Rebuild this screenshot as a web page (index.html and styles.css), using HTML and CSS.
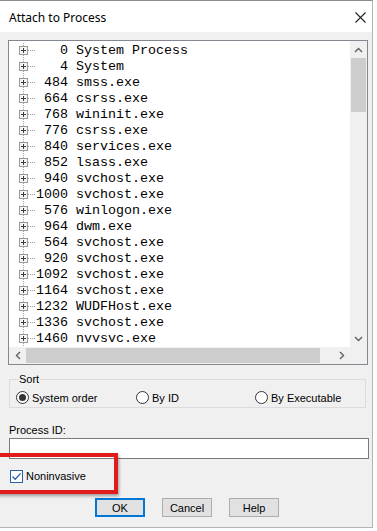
FILE: index.html
```html
<!DOCTYPE html>
<html>
<head>
<meta charset="utf-8">
<title>Attach to Process</title>
<link rel="stylesheet" href="styles.css">
</head>
<body>
<div class="window">
  <div class="titlebar">
    <span class="title">Attach to Process</span>
    <svg class="close" width="11" height="11" viewBox="0 0 11 11"><path d="M0.5 0.5L10.5 10.5M10.5 0.5L0.5 10.5" stroke="#222" stroke-width="1.1" fill="none"/></svg>
  </div>
  <div class="content">
    <div class="listbox">
      <div class="rows">
        <div class="row"><svg class="tw" width="17" height="16"><path d="M4.5 0V3M4.5 12V16" stroke="#a0a0a0" stroke-dasharray="1 1"/><rect x="0.5" y="3.5" width="8" height="8" fill="#f4f4f4" stroke="#9a9a9a"/><path d="M2 7.5H7M4.5 5V10" stroke="#3c3c3c"/><path d="M9 7.5H16" stroke="#a0a0a0" stroke-dasharray="1 1"/></svg><span class="txt">   0 System Process</span></div>
        <div class="row"><svg class="tw" width="17" height="16"><path d="M4.5 0V3M4.5 12V16" stroke="#a0a0a0" stroke-dasharray="1 1"/><rect x="0.5" y="3.5" width="8" height="8" fill="#f4f4f4" stroke="#9a9a9a"/><path d="M2 7.5H7M4.5 5V10" stroke="#3c3c3c"/><path d="M9 7.5H16" stroke="#a0a0a0" stroke-dasharray="1 1"/></svg><span class="txt">   4 System</span></div>
        <div class="row"><svg class="tw" width="17" height="16"><path d="M4.5 0V3M4.5 12V16" stroke="#a0a0a0" stroke-dasharray="1 1"/><rect x="0.5" y="3.5" width="8" height="8" fill="#f4f4f4" stroke="#9a9a9a"/><path d="M2 7.5H7M4.5 5V10" stroke="#3c3c3c"/><path d="M9 7.5H16" stroke="#a0a0a0" stroke-dasharray="1 1"/></svg><span class="txt"> 484 smss.exe</span></div>
        <div class="row"><svg class="tw" width="17" height="16"><path d="M4.5 0V3M4.5 12V16" stroke="#a0a0a0" stroke-dasharray="1 1"/><rect x="0.5" y="3.5" width="8" height="8" fill="#f4f4f4" stroke="#9a9a9a"/><path d="M2 7.5H7M4.5 5V10" stroke="#3c3c3c"/><path d="M9 7.5H16" stroke="#a0a0a0" stroke-dasharray="1 1"/></svg><span class="txt"> 664 csrss.exe</span></div>
        <div class="row"><svg class="tw" width="17" height="16"><path d="M4.5 0V3M4.5 12V16" stroke="#a0a0a0" stroke-dasharray="1 1"/><rect x="0.5" y="3.5" width="8" height="8" fill="#f4f4f4" stroke="#9a9a9a"/><path d="M2 7.5H7M4.5 5V10" stroke="#3c3c3c"/><path d="M9 7.5H16" stroke="#a0a0a0" stroke-dasharray="1 1"/></svg><span class="txt"> 768 wininit.exe</span></div>
        <div class="row"><svg class="tw" width="17" height="16"><path d="M4.5 0V3M4.5 12V16" stroke="#a0a0a0" stroke-dasharray="1 1"/><rect x="0.5" y="3.5" width="8" height="8" fill="#f4f4f4" stroke="#9a9a9a"/><path d="M2 7.5H7M4.5 5V10" stroke="#3c3c3c"/><path d="M9 7.5H16" stroke="#a0a0a0" stroke-dasharray="1 1"/></svg><span class="txt"> 776 csrss.exe</span></div>
        <div class="row"><svg class="tw" width="17" height="16"><path d="M4.5 0V3M4.5 12V16" stroke="#a0a0a0" stroke-dasharray="1 1"/><rect x="0.5" y="3.5" width="8" height="8" fill="#f4f4f4" stroke="#9a9a9a"/><path d="M2 7.5H7M4.5 5V10" stroke="#3c3c3c"/><path d="M9 7.5H16" stroke="#a0a0a0" stroke-dasharray="1 1"/></svg><span class="txt"> 840 services.exe</span></div>
        <div class="row"><svg class="tw" width="17" height="16"><path d="M4.5 0V3M4.5 12V16" stroke="#a0a0a0" stroke-dasharray="1 1"/><rect x="0.5" y="3.5" width="8" height="8" fill="#f4f4f4" stroke="#9a9a9a"/><path d="M2 7.5H7M4.5 5V10" stroke="#3c3c3c"/><path d="M9 7.5H16" stroke="#a0a0a0" stroke-dasharray="1 1"/></svg><span class="txt"> 852 lsass.exe</span></div>
        <div class="row"><svg class="tw" width="17" height="16"><path d="M4.5 0V3M4.5 12V16" stroke="#a0a0a0" stroke-dasharray="1 1"/><rect x="0.5" y="3.5" width="8" height="8" fill="#f4f4f4" stroke="#9a9a9a"/><path d="M2 7.5H7M4.5 5V10" stroke="#3c3c3c"/><path d="M9 7.5H16" stroke="#a0a0a0" stroke-dasharray="1 1"/></svg><span class="txt"> 940 svchost.exe</span></div>
        <div class="row"><svg class="tw" width="17" height="16"><path d="M4.5 0V3M4.5 12V16" stroke="#a0a0a0" stroke-dasharray="1 1"/><rect x="0.5" y="3.5" width="8" height="8" fill="#f4f4f4" stroke="#9a9a9a"/><path d="M2 7.5H7M4.5 5V10" stroke="#3c3c3c"/><path d="M9 7.5H16" stroke="#a0a0a0" stroke-dasharray="1 1"/></svg><span class="txt">1000 svchost.exe</span></div>
        <div class="row"><svg class="tw" width="17" height="16"><path d="M4.5 0V3M4.5 12V16" stroke="#a0a0a0" stroke-dasharray="1 1"/><rect x="0.5" y="3.5" width="8" height="8" fill="#f4f4f4" stroke="#9a9a9a"/><path d="M2 7.5H7M4.5 5V10" stroke="#3c3c3c"/><path d="M9 7.5H16" stroke="#a0a0a0" stroke-dasharray="1 1"/></svg><span class="txt"> 576 winlogon.exe</span></div>
        <div class="row"><svg class="tw" width="17" height="16"><path d="M4.5 0V3M4.5 12V16" stroke="#a0a0a0" stroke-dasharray="1 1"/><rect x="0.5" y="3.5" width="8" height="8" fill="#f4f4f4" stroke="#9a9a9a"/><path d="M2 7.5H7M4.5 5V10" stroke="#3c3c3c"/><path d="M9 7.5H16" stroke="#a0a0a0" stroke-dasharray="1 1"/></svg><span class="txt"> 964 dwm.exe</span></div>
        <div class="row"><svg class="tw" width="17" height="16"><path d="M4.5 0V3M4.5 12V16" stroke="#a0a0a0" stroke-dasharray="1 1"/><rect x="0.5" y="3.5" width="8" height="8" fill="#f4f4f4" stroke="#9a9a9a"/><path d="M2 7.5H7M4.5 5V10" stroke="#3c3c3c"/><path d="M9 7.5H16" stroke="#a0a0a0" stroke-dasharray="1 1"/></svg><span class="txt"> 564 svchost.exe</span></div>
        <div class="row"><svg class="tw" width="17" height="16"><path d="M4.5 0V3M4.5 12V16" stroke="#a0a0a0" stroke-dasharray="1 1"/><rect x="0.5" y="3.5" width="8" height="8" fill="#f4f4f4" stroke="#9a9a9a"/><path d="M2 7.5H7M4.5 5V10" stroke="#3c3c3c"/><path d="M9 7.5H16" stroke="#a0a0a0" stroke-dasharray="1 1"/></svg><span class="txt"> 920 svchost.exe</span></div>
        <div class="row"><svg class="tw" width="17" height="16"><path d="M4.5 0V3M4.5 12V16" stroke="#a0a0a0" stroke-dasharray="1 1"/><rect x="0.5" y="3.5" width="8" height="8" fill="#f4f4f4" stroke="#9a9a9a"/><path d="M2 7.5H7M4.5 5V10" stroke="#3c3c3c"/><path d="M9 7.5H16" stroke="#a0a0a0" stroke-dasharray="1 1"/></svg><span class="txt">1092 svchost.exe</span></div>
        <div class="row"><svg class="tw" width="17" height="16"><path d="M4.5 0V3M4.5 12V16" stroke="#a0a0a0" stroke-dasharray="1 1"/><rect x="0.5" y="3.5" width="8" height="8" fill="#f4f4f4" stroke="#9a9a9a"/><path d="M2 7.5H7M4.5 5V10" stroke="#3c3c3c"/><path d="M9 7.5H16" stroke="#a0a0a0" stroke-dasharray="1 1"/></svg><span class="txt">1164 svchost.exe</span></div>
        <div class="row"><svg class="tw" width="17" height="16"><path d="M4.5 0V3M4.5 12V16" stroke="#a0a0a0" stroke-dasharray="1 1"/><rect x="0.5" y="3.5" width="8" height="8" fill="#f4f4f4" stroke="#9a9a9a"/><path d="M2 7.5H7M4.5 5V10" stroke="#3c3c3c"/><path d="M9 7.5H16" stroke="#a0a0a0" stroke-dasharray="1 1"/></svg><span class="txt">1232 WUDFHost.exe</span></div>
        <div class="row"><svg class="tw" width="17" height="16"><path d="M4.5 0V3M4.5 12V16" stroke="#a0a0a0" stroke-dasharray="1 1"/><rect x="0.5" y="3.5" width="8" height="8" fill="#f4f4f4" stroke="#9a9a9a"/><path d="M2 7.5H7M4.5 5V10" stroke="#3c3c3c"/><path d="M9 7.5H16" stroke="#a0a0a0" stroke-dasharray="1 1"/></svg><span class="txt">1336 svchost.exe</span></div>
        <div class="row"><svg class="tw" width="17" height="16"><path d="M4.5 0V3M4.5 12V16" stroke="#a0a0a0" stroke-dasharray="1 1"/><rect x="0.5" y="3.5" width="8" height="8" fill="#f4f4f4" stroke="#9a9a9a"/><path d="M2 7.5H7M4.5 5V10" stroke="#3c3c3c"/><path d="M9 7.5H16" stroke="#a0a0a0" stroke-dasharray="1 1"/></svg><span class="txt">1460 nvvsvc.exe</span></div>
      </div>
      <div class="vscroll">
        <div class="sbtn"><svg width="9" height="6" viewBox="0 0 9 6"><path d="M1 5L4.5 1.5L8 5" stroke="#606060" stroke-width="1.4" fill="none"/></svg></div>
        <div class="vthumb"></div>
        <div class="vtrack"></div>
        <div class="sbtn"><svg width="9" height="6" viewBox="0 0 9 6"><path d="M1 1L4.5 4.5L8 1" stroke="#606060" stroke-width="1.4" fill="none"/></svg></div>
      </div>
      <div class="hscroll">
        <div class="sbtn"><svg width="6" height="9" viewBox="0 0 6 9"><path d="M5 1L1.5 4.5L5 8" stroke="#606060" stroke-width="1.4" fill="none"/></svg></div>
        <div class="hthumb"></div>
        <div class="htrack"></div>
        <div class="sbtn"><svg width="6" height="9" viewBox="0 0 6 9"><path d="M1 1L4.5 4.5L1 8" stroke="#606060" stroke-width="1.4" fill="none"/></svg></div>
      </div>
      <div class="corner"></div>
    </div>

    <fieldset class="group">
      <legend class="legend">Sort</legend>
      <div class="radios">
        <div class="radio"><span class="rcircle on"></span><span>System order</span></div>
        <div class="radio"><span class="rcircle"></span><span>By ID</span></div>
        <div class="radio"><span class="rcircle"></span><span>By Executable</span></div>
      </div>
    </fieldset>

    <div class="pid-label">Process ID:</div>
    <div class="pid-input"></div>

    <div class="check">
      <span class="cbox"><svg width="11" height="11" viewBox="0 0 11 11"><path d="M1.5 5.5L4.2 8.3L9.6 2.4" stroke="#2a62a8" stroke-width="1.3" fill="none"/></svg></span>
      <span>Noninvasive</span>
    </div>

    <div class="buttons">
      <div class="btn default">OK</div>
      <div class="btn">Cancel</div>
      <div class="btn">Help</div>
    </div>

    <div class="highlight"></div>
  </div>
</div>
</body>
</html>
```

FILE: styles.css
```css
html, body {
  margin: 0;
  padding: 0;
  background: #ffffff;
}

.window {
  width: 372px;
  height: 526px;
  border-top: 1px solid #8c8c8c;
  border-right: 1px solid #b4b4b4;
  border-bottom: 1px solid #b4b4b4;
  background: #f0f0f0;
  display: flex;
  flex-direction: column;
  overflow: hidden;
}

.titlebar {
  height: 31px;
  background: #ffffff;
  display: flex;
  align-items: center;
  justify-content: space-between;
  padding: 0 6px 0 9px;
  flex: none;
}

.title {
  font-family: "Noto Sans", "Open Sans", sans-serif;
  font-size: 12px;
  color: #000;
  padding-top: 1px;
}

.close {
  display: block;
  margin-top: 2px;
}

.content {
  position: relative;
  flex: 1;
  padding: 8px 0 0 8px;
  font-family: "Liberation Sans", Arial, sans-serif;
  font-size: 11px;
  color: #000;
}

.listbox {
  width: 358px;
  height: 323px;
  border: 1px solid #828790;
  background: #fff;
  display: grid;
  grid-template-columns: 1fr 17px;
  grid-template-rows: 1fr 17px;
}

.rows {
  overflow: hidden;
  padding-left: 10px;
  padding-top: 2px;
}

.row {
  height: 16px;
  display: flex;
  align-items: center;
}

.tw {
  display: block;
  flex: none;
}

.txt {
  font-family: "Liberation Mono", "Courier New", monospace;
  font-size: 13.33px;
  white-space: pre;
  color: #000;
  line-height: 16px;
}

.vscroll {
  background: #f0f0f0;
  display: flex;
  flex-direction: column;
}

.sbtn {
  width: 17px;
  height: 17px;
  flex: none;
  display: flex;
  align-items: center;
  justify-content: center;
}

.vthumb {
  height: 54px;
  margin: 0 1px;
  background: #cdcdcd;
  flex: none;
}

.vtrack {
  flex: 1;
}

.hscroll {
  background: #f0f0f0;
  display: flex;
}

.hthumb {
  width: 294px;
  margin: 1px 0;
  background: #cdcdcd;
  flex: none;
}

.htrack {
  flex: 1;
}

.corner {
  background: #f0f0f0;
}

.group {
  margin: 8px 0 0 1px;
  width: 357px;
  height: 35px;
  box-sizing: border-box;
  border: 1px solid #dcdcdc;
  padding: 0 0 0 6px;
  min-width: 0;
}

.legend {
  padding: 0 1px;
  margin-left: 2px;
  font-size: 11px;
  line-height: 13px;
}

.radios {
  display: grid;
  grid-template-columns: 120px 119px auto;
  margin-top: 5px;
}

.radio {
  display: flex;
  align-items: center;
  gap: 3px;
}

.rcircle {
  width: 11px;
  height: 11px;
  border: 1px solid #333;
  border-radius: 50%;
  background: #fff;
  display: flex;
  align-items: center;
  justify-content: center;
  flex: none;
}

.rcircle.on::after {
  content: "";
  width: 7px;
  height: 7px;
  border-radius: 50%;
  background: #333;
}

.pid-label {
  margin-top: 16px;
  line-height: 13px;
  padding-left: 1px;
}

.pid-input {
  margin-top: 1px;
  width: 358px;
  height: 19px;
  background: #fff;
  border: 1px solid #7a7a7a;
  margin-left: 1px;
}

.check {
  margin-top: 10px;
  display: flex;
  align-items: center;
  gap: 3px;
  padding-left: 2px;
  height: 14px;
}

.cbox {
  width: 11px;
  height: 11px;
  border: 1px solid #2a62a8;
  background: #fff;
  display: flex;
  align-items: center;
  justify-content: center;
}

.cbox svg {
  display: block;
}

.buttons {
  margin-top: 15px;
  display: flex;
  gap: 17px;
  padding-left: 87px;
}

.btn {
  width: 48px;
  height: 17px;
  border: 1px solid #adadad;
  background: #e1e1e1;
  display: flex;
  align-items: center;
  justify-content: center;
  font-size: 11px;
}

.btn.default {
  width: 46px;
  height: 15px;
  border: 2px solid #0078d7;
}

.highlight {
  position: absolute;
  left: -4px;
  top: 421px;
  width: 114px;
  height: 33px;
  border: 4px solid #e01b1b;
  box-shadow: 1px 2px 3px rgba(0, 0, 0, 0.35);
}
```
